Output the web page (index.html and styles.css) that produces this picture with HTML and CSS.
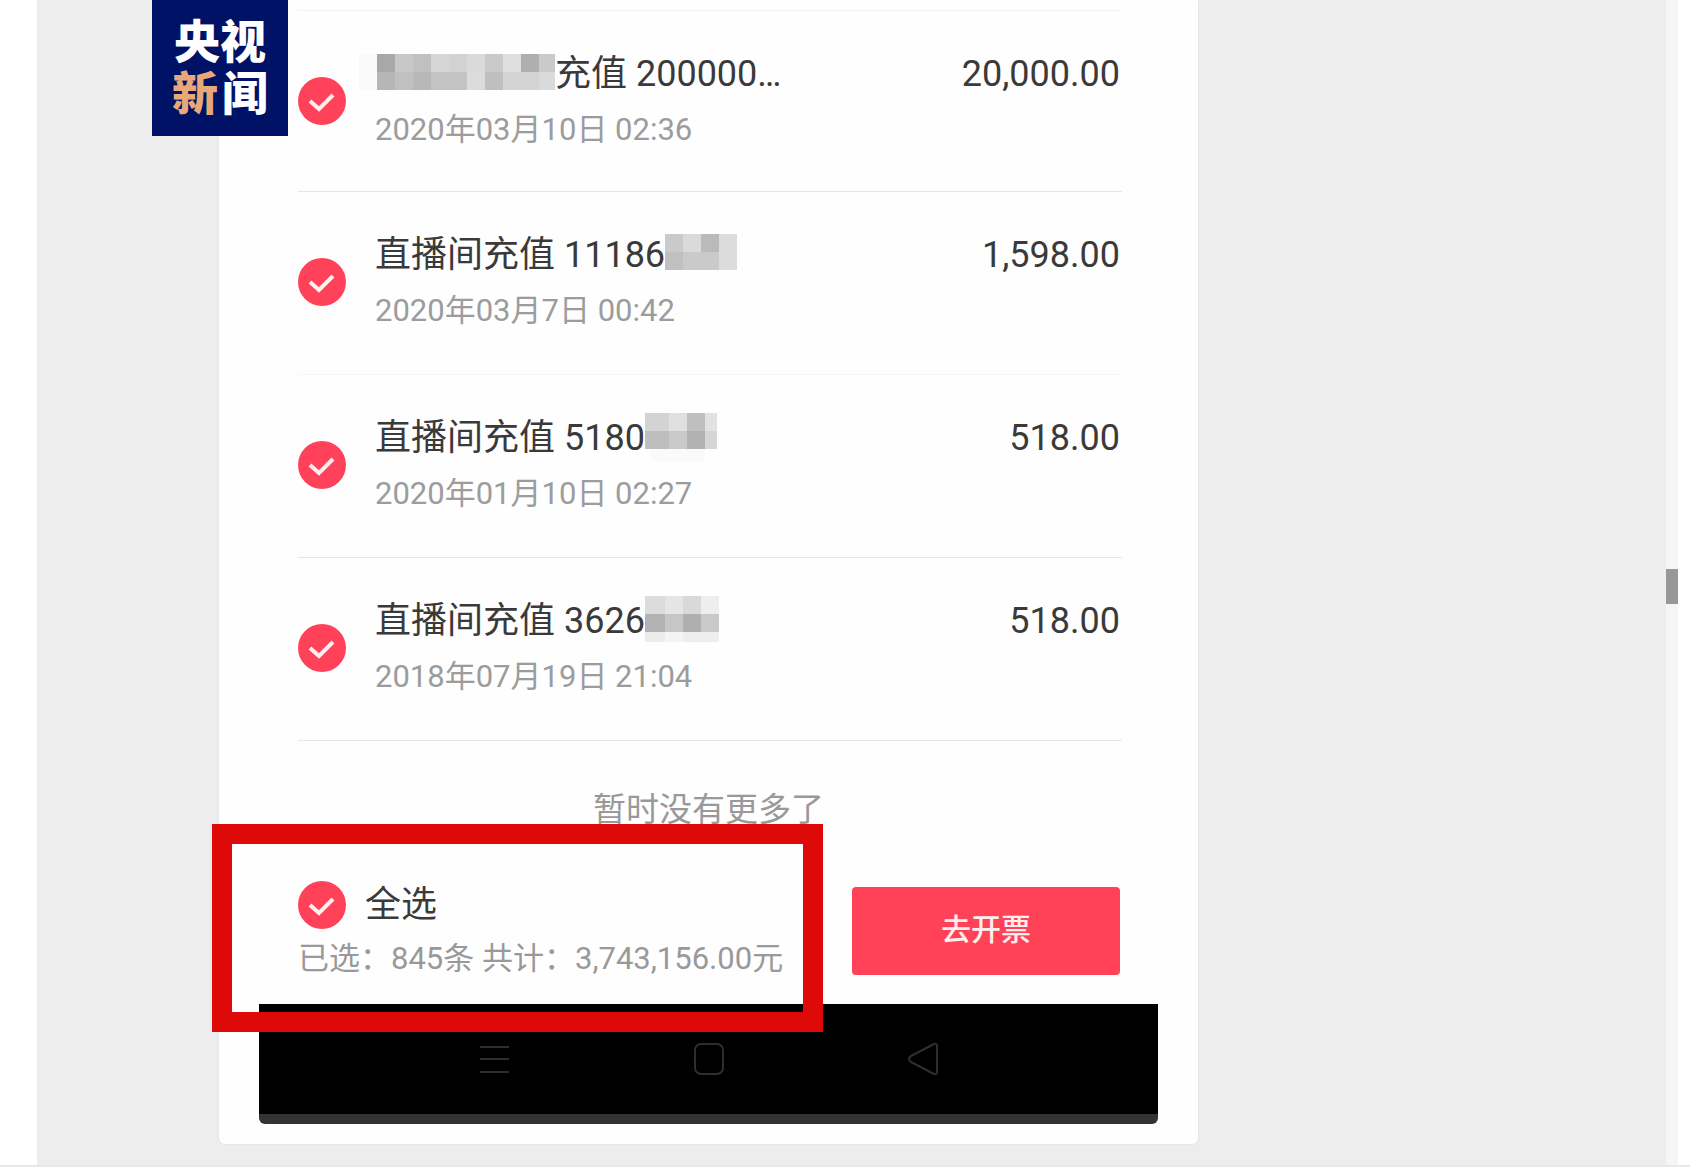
FILE: index.html
```html
<!DOCTYPE html>
<html lang="zh-CN">
<head>
    <meta charset="UTF-8">
    <meta name="viewport" content="width=device-width, initial-scale=1.0">
    <title>开票</title>
    <link rel="stylesheet" href="styles.css">
</head>
<body>

<div class="page">
    <main class="content">
        <div class="logo"><span>央视</span><span><em>新</em>闻</span></div>

        <div class="card">
            <ul class="list">
                <li class="row">
                    <span class="check">
                        <input type="checkbox" id="item1" checked>
                        <svg viewBox="0 0 48 48" aria-hidden="true"><path d="M12 24l9 8 14-14"/></svg>
                    </span>
                    <label class="info" for="item1">
                        <span class="title"><svg class="mosaic mosaic-start" width="178" height="36" viewBox="0 0 178 36" aria-hidden="true">
                            <path fill="#a8a8a8" d="M0 0h18v18H0z"/><path fill="#c8c8c8" d="M18 0h18v18H18z"/><path fill="#c0c0c0" d="M36 0h18v18H36z"/><path fill="#d6d6d6" d="M54 0h18v18H54z"/><path fill="#d2d2d2" d="M72 0h18v18H72z"/><path fill="#dadada" d="M90 0h18v18H90z"/><path fill="#cacaca" d="M108 0h18v18h-18z"/><path fill="#dfdfdf" d="M126 0h18v18h-18z"/><path fill="#afafaf" d="M144 0h18v18h-18z"/><path fill="#cacaca" d="M162 0h16v18h-16z"/>
                            <path fill="#b6b6b6" d="M0 18h18v18H0z"/><path fill="#c0c0c0" d="M18 18h18v18H18z"/><path fill="#b8b8b8" d="M36 18h18v18H36z"/><path fill="#c3c3c3" d="M54 18h36v18H54z"/><path fill="#dcdcdc" d="M90 18h18v18H90z"/><path fill="#bfbfbf" d="M108 18h18v18h-18z"/><path fill="#d4d4d4" d="M126 18h36v18h-36z"/><path fill="#dadada" d="M162 18h16v18h-16z"/>
                            <path fill="#f9f9f9" d="M-18 0h18v36h-18z"/>
                        </svg>充值 200000…</span>
                        <span class="date">2020年03月10日 02:36</span>
                    </label>
                    <span class="amount">20,000.00</span>
                </li>
                <li class="row">
                    <span class="check">
                        <input type="checkbox" id="item2" checked>
                        <svg viewBox="0 0 48 48" aria-hidden="true"><path d="M12 24l9 8 14-14"/></svg>
                    </span>
                    <label class="info" for="item2">
                        <span class="title">直播间充值 11186<svg class="mosaic" width="72" height="36" viewBox="0 0 72 36" aria-hidden="true">
                            <path fill="#cacaca" d="M0 0h18v18H0z"/><path fill="#dadada" d="M18 0h18v18H18z"/><path fill="#bababa" d="M36 0h18v18H36z"/><path fill="#dcdcdc" d="M54 0h18v36H54z"/>
                            <path fill="#c0c0c0" d="M0 18h18v18H0z"/><path fill="#cacaca" d="M18 18h36v18H18z"/>
                        </svg></span>
                        <span class="date">2020年03月7日 00:42</span>
                    </label>
                    <span class="amount">1,598.00</span>
                </li>
                <li class="row">
                    <span class="check">
                        <input type="checkbox" id="item3" checked>
                        <svg viewBox="0 0 48 48" aria-hidden="true"><path d="M12 24l9 8 14-14"/></svg>
                    </span>
                    <label class="info" for="item3">
                        <span class="title">直播间充值 5180<svg class="mosaic mosaic-high" width="72" height="36" viewBox="0 0 72 36" aria-hidden="true">
                            <path fill="#d3d3d3" d="M0 0h24v18H0z"/><path fill="#e0e0e0" d="M24 0h18v18H24z"/><path fill="#bfbfbf" d="M42 0h18v18H42z"/><path fill="#e2e2e2" d="M60 0h12v18H60z"/>
                            <path fill="#bebebe" d="M0 18h24v18H0z"/><path fill="#c9c9c9" d="M24 18h18v18H24z"/><path fill="#b2b2b2" d="M42 18h18v18H42z"/><path fill="#d6d6d6" d="M60 18h12v18H60z"/>
                            <path fill="#fafafa" d="M6 36h54v12H6z"/>
                        </svg></span>
                        <span class="date">2020年01月10日 02:27</span>
                    </label>
                    <span class="amount">518.00</span>
                </li>
                <li class="row">
                    <span class="check">
                        <input type="checkbox" id="item4" checked>
                        <svg viewBox="0 0 48 48" aria-hidden="true"><path d="M12 24l9 8 14-14"/></svg>
                    </span>
                    <label class="info" for="item4">
                        <span class="title">直播间充值 3626<svg class="mosaic mosaic-high" width="74" height="36" viewBox="0 0 74 36" aria-hidden="true">
                            <path fill="#dcdcdc" d="M0 0h20v18H0z"/><path fill="#e5e5e5" d="M20 0h18v18H20z"/><path fill="#d9d9d9" d="M38 0h18v18H38z"/><path fill="#eeeeee" d="M56 0h18v18H56z"/>
                            <path fill="#b3b3b3" d="M0 18h20v18H0z"/><path fill="#c6c6c6" d="M20 18h18v18H20z"/><path fill="#afafaf" d="M38 18h18v18H38z"/><path fill="#c9c9c9" d="M56 18h18v18H56z"/>
                            <path fill="#ececec" d="M0 36h20v10H0z"/><path fill="#f4f4f4" d="M20 36h18v10H20z"/><path fill="#eeeeee" d="M38 36h36v10H38z"/>
                        </svg></span>
                        <span class="date">2018年07月19日 21:04</span>
                    </label>
                    <span class="amount">518.00</span>
                </li>
            </ul>

            <p class="nomore">暂时没有更多了</p>

            <div class="footer">
                <div class="summary">
                    <div class="all">
                        <span class="check">
                            <input type="checkbox" id="all" checked>
                            <svg viewBox="0 0 48 48" aria-hidden="true"><path d="M12 24l9 8 14-14"/></svg>
                        </span>
                        <label for="all">全选</label>
                    </div>
                    <p class="total">已选：845条 共计：3,743,156.00元</p>
                    <div class="highlight"></div>
                </div>
                <button type="button" class="invoice">去开票</button>
            </div>

            <div class="navbar">
                <svg width="32" height="36" viewBox="0 0 32 36" aria-hidden="true"><path d="M1 6h29M1 18h29M1 31h29"/></svg>
                <svg width="32" height="36" viewBox="0 0 32 36" aria-hidden="true"><rect x="2" y="3" width="28" height="30" rx="6"/></svg>
                <svg width="32" height="36" viewBox="0 0 32 36" aria-hidden="true"><path d="M2 18q0-2 2-3L27 3q3-1 3 2v26q0 3-3 2L4 21q-2-1-2-3z"/></svg>
            </div>
        </div>
    </main>
    <div class="scrollbar"><div class="thumb"></div></div>
</div>

</body>
</html>
```

FILE: styles.css
```css
* {
    box-sizing: border-box;
}

body {
    font-family: Roboto, "Noto Sans CJK SC", sans-serif;
    background-color: #ffffff;
    color: #3a3a3a;
    margin: 0;
}

p, ul {
    margin: 0;
    padding: 0;
}

.page {
    display: flex;
    padding: 0 12px 0 37px;
    border-bottom: 2px solid #e8e8e8;
}

.content {
    position: relative;
    flex: 1;
    background-color: #ededed;
    padding: 0 20px 21px 182px;
}

/* logo */
.logo {
    position: absolute;
    top: 0;
    left: 115px;
    z-index: 2;
    width: 136px;
    height: 136px;
    padding-top: 16px;
    background-color: #001266;
    color: #ffffff;
    font-family: "Liberation Sans", "Noto Sans CJK SC", sans-serif;
    font-size: 46px;
    font-weight: 900;
    line-height: 52px;
}

.logo span {
    display: flex;
    justify-content: center;
    height: 52px;
}

.logo span + span {
    gap: 4px;
}

.logo em {
    color: #e8a878;
    font-style: normal;
}

/* card */
.card {
    max-width: 979px;
    padding: 10px 40px 20px;
    background-color: #fefefe;
    border-radius: 0 0 6px 6px;
    box-shadow: 0 0 2px rgba(0, 0, 0, 0.1);
}

.list {
    margin: 0 36px 0 39px;
    border-top: 1px solid #f2f2f2;
    list-style: none;
}

.row {
    display: flex;
    align-items: center;
    padding: 36px 2px 38px 0;
    border-bottom: 1px solid #e6e6e6;
}

.row:first-child {
    padding-bottom: 36px;
}

.row:nth-child(2) {
    border-bottom-color: #f6f6f6;
}

.check {
    display: grid;
    width: 48px;
    height: 48px;
}

.check input, .check svg {
    grid-area: 1 / 1;
    width: 48px;
    height: 48px;
    margin: 0;
}

.check input {
    appearance: none;
    border-radius: 50%;
    background-color: #ff415a;
}

.check svg {
    pointer-events: none;
    fill: none;
    stroke: #fff0ee;
    stroke-width: 4;
}

.info {
    flex: 1;
    margin-left: 29px;
}

.title, .date {
    display: flex;
    align-items: center;
    height: 54px;
    white-space: pre;
}

.title, .amount {
    font-size: 36px;
    line-height: 54px;
}

.date {
    padding-bottom: 4px;
    color: #9c9c9c;
    font-size: 31px;
}

.amount {
    align-self: flex-start;
}

.mosaic {
    margin-bottom: 6px;
    overflow: visible;
    shape-rendering: crispEdges;
}

.mosaic-start {
    margin-left: 2px;
    margin-bottom: 4px;
}

.mosaic-high {
    margin-bottom: 14px;
}

.nomore {
    padding-top: 44px;
    color: #999999;
    font-size: 33px;
    line-height: 50px;
    text-align: center;
}

/* footer */
.footer {
    display: flex;
    align-items: center;
    justify-content: space-between;
    padding: 46px 38px 23px 39px;
}

.summary {
    position: relative;
}

.all {
    display: flex;
    align-items: center;
    gap: 19px;
    height: 48px;
    font-size: 36px;
}

.all label {
    padding-bottom: 9px;
}

.total {
    margin-top: 8px;
    color: #999999;
    font-size: 31px;
    line-height: 44px;
    white-space: nowrap;
}

.highlight {
    position: absolute;
    top: -57px;
    left: -86px;
    width: 611px;
    height: 208px;
    border: 20px solid #de0909;
    pointer-events: none;
}

.invoice {
    width: 268px;
    height: 88px;
    padding: 0 0 8px;
    border: none;
    border-radius: 4px;
    background-color: #ff4258;
    color: #ffeeee;
    font-family: inherit;
    font-size: 30px;
    font-weight: 500;
    cursor: pointer;
}

.navbar {
    display: flex;
    justify-content: center;
    gap: 182px;
    height: 120px;
    padding-top: 37px;
    border-bottom: 10px solid #333333;
    border-radius: 0 0 6px 6px;
    background-color: #000000;
}

.navbar svg {
    fill: none;
    stroke: #2e2e2e;
    stroke-width: 2;
}

/* scrollbar */
.scrollbar {
    display: flex;
    align-items: center;
    width: 12px;
    padding-top: 8px;
    background-color: #f6f4f5;
}

.thumb {
    width: 12px;
    height: 35px;
    background-color: #979797;
}
```
